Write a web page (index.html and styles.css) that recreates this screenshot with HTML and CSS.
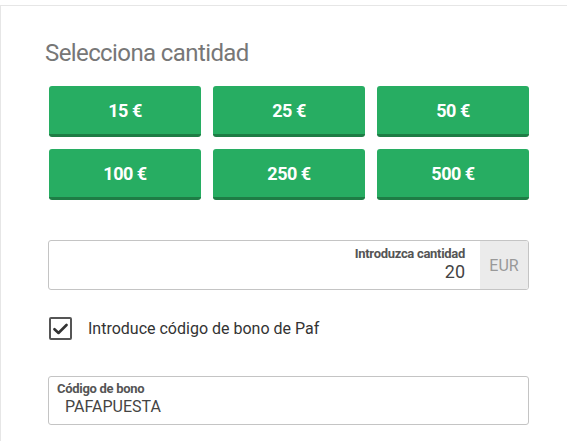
FILE: index.html
```html
<!DOCTYPE html>
<html lang="es">
<head>
<meta charset="utf-8">
<link rel="stylesheet" href="styles.css">
</head>
<body>
<div class="panel">
  <h2 class="title">Selecciona cantidad</h2>
  <div class="amounts">
    <button class="amount">15 €</button>
    <button class="amount">25 €</button>
    <button class="amount">50 €</button>
    <button class="amount">100 €</button>
    <button class="amount">250 €</button>
    <button class="amount">500 €</button>
  </div>
  <div class="field amount-field">
    <div class="field-main">
      <span class="field-label">Introduzca cantidad</span>
      <span class="field-value">20</span>
    </div>
    <div class="currency">EUR</div>
  </div>
  <label class="check-row">
    <span class="checkbox">
      <svg width="15" height="12" viewBox="0 0 15 12"><path d="M1.5 6.2 L5.5 10 L13.5 2" fill="none" stroke="#333" stroke-width="2.6" stroke-linecap="round" stroke-linejoin="round"/></svg>
    </span>
    <span class="check-label">Introduce código de bono de Paf</span>
  </label>
  <div class="field coupon-field">
    <span class="coupon-label">Código de bono</span>
    <span class="coupon-value">PAFAPUESTA</span>
  </div>
</div>
</body>
</html>
```
FILE: styles.css
```css
html, body {
  margin: 0;
  background: #fff;
  font-family: Roboto, "Liberation Sans", sans-serif;
}
.panel {
  margin-top: 5px;
  border-top: 1px solid #e6e6e6;
  border-left: 1px solid #e6e6e6;
  padding: 0 38px 0 47px;
  height: calc(100vh - 5px);
  box-sizing: border-box;
  overflow: hidden;
}
.title {
  margin: 32px 0 0 -3px;
  font-size: 24px;
  font-weight: 400;
  color: #777;
  line-height: 30px;
  letter-spacing: -0.6px;
}
.amounts {
  margin-top: 18px;
  display: grid;
  grid-template-columns: repeat(3, 1fr);
  gap: 12px;
  padding-left: 1px;
}
.amount {
  height: 51px;
  border: 0;
  border-bottom: 3px solid #1e7d45;
  border-radius: 3px;
  background: #27ad62;
  color: #fff;
  font-family: Roboto, "Liberation Sans", sans-serif;
  font-weight: 700;
  font-size: 18px;
  letter-spacing: -0.5px;
  padding: 0;
}
.field {
  border: 1px solid #c4c4c4;
  border-radius: 3px;
  box-sizing: border-box;
}
.amount-field {
  margin-top: 40px;
  height: 50px;
  display: flex;
  overflow: hidden;
}
.field-main {
  flex: 1;
  display: flex;
  flex-direction: column;
  align-items: flex-end;
  padding: 5px 15px 0 0;
}
.field-label {
  font-size: 13px;
  font-weight: 700;
  color: #555;
  letter-spacing: -0.3px;
  line-height: 15px;
}
.field-value {
  font-size: 18px;
  color: #444;
  line-height: 22px;
}
.currency {
  width: 48px;
  background: #ebebeb;
  color: #999;
  font-size: 16px;
  display: flex;
  align-items: center;
  justify-content: center;
}
.check-row {
  margin-top: 27px;
  display: flex;
  align-items: center;
  gap: 16px;
  padding-left: 1px;
}
.checkbox {
  width: 23px;
  height: 23px;
  box-sizing: border-box;
  border: 2px solid #555;
  border-radius: 2px;
  display: flex;
  align-items: center;
  justify-content: center;
}
.check-label {
  font-size: 16px;
  color: #333;
}
.coupon-field {
  margin-top: 36px;
  height: 49px;
  display: flex;
  flex-direction: column;
  padding: 4px 8px 0 8px;
}
.coupon-label {
  font-size: 13px;
  font-weight: 700;
  color: #555;
  letter-spacing: -0.3px;
  line-height: 15px;
}
.coupon-value {
  font-size: 16px;
  color: #444;
  padding-left: 8px;
  line-height: 21px;
}
```
